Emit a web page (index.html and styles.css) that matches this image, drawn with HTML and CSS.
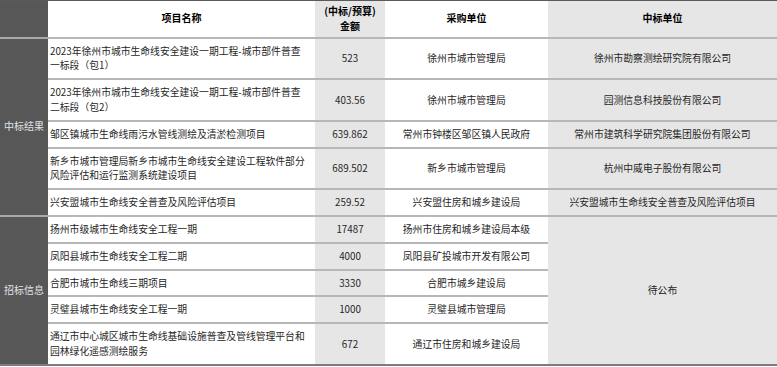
FILE: index.html
```html
<!DOCTYPE html>
<html lang="zh-CN">
<head>
<meta charset="utf-8">
<title>城市生命线项目</title>
<link rel="stylesheet" href="styles.css">
</head>
<body>
<div class="sheet">
  <div class="cell cat head-cat"></div>
  <div class="cell head">项目名称</div>
  <div class="cell head gray">(中标/预算)<br>金额</div>
  <div class="cell head">采购单位</div>
  <div class="cell head gray">中标单位</div>

  <div class="cell cat span5">中标结果</div>
  <div class="cell name">2023年徐州市城市生命线安全建设一期工程-城市部件普查<br>一标段（包1）</div>
  <div class="cell num gray">523</div>
  <div class="cell mid">徐州市城市管理局</div>
  <div class="cell mid gray">徐州市勘察测绘研究院有限公司</div>

  <div class="cell name">2023年徐州市城市生命线安全建设一期工程-城市部件普查<br>二标段（包2）</div>
  <div class="cell num gray">403.56</div>
  <div class="cell mid">徐州市城市管理局</div>
  <div class="cell mid gray">园测信息科技股份有限公司</div>

  <div class="cell name">邹区镇城市生命线雨污水管线测绘及清淤检测项目</div>
  <div class="cell num gray">639.862</div>
  <div class="cell mid">常州市钟楼区邹区镇人民政府</div>
  <div class="cell mid gray">常州市建筑科学研究院集团股份有限公司</div>

  <div class="cell name">新乡市城市管理局新乡市城市生命线安全建设工程软件部分<br>风险评估和运行监测系统建设项目</div>
  <div class="cell num gray">689.502</div>
  <div class="cell mid">新乡市城市管理局</div>
  <div class="cell mid gray">杭州中威电子股份有限公司</div>

  <div class="cell name">兴安盟城市生命线安全普查及风险评估项目</div>
  <div class="cell num gray">259.52</div>
  <div class="cell mid">兴安盟住房和城乡建设局</div>
  <div class="cell mid gray">兴安盟城市生命线安全普查及风险评估项目</div>

  <div class="cell cat span5 last">招标信息</div>
  <div class="cell name">扬州市级城市生命线安全工程一期</div>
  <div class="cell num gray">17487</div>
  <div class="cell mid">扬州市住房和城乡建设局本级</div>
  <div class="cell mid gray pending span5 last">待公布</div>

  <div class="cell name">凤阳县城市生命线安全工程二期</div>
  <div class="cell num gray">4000</div>
  <div class="cell mid">凤阳县矿投城市开发有限公司</div>

  <div class="cell name">合肥市城市生命线三期项目</div>
  <div class="cell num gray">3330</div>
  <div class="cell mid">合肥市城乡建设局</div>

  <div class="cell name">灵璧县城市生命线安全工程一期</div>
  <div class="cell num gray">1000</div>
  <div class="cell mid">灵璧县城市管理局</div>

  <div class="cell name last">通辽市中心城区城市生命线基础设施普查及管线管理平台和<br>园林绿化遥感测绘服务</div>
  <div class="cell num gray last">672</div>
  <div class="cell mid last">通辽市住房和城乡建设局</div>
</div>
</body>
</html>
```

FILE: styles.css
```css
html, body {
  margin: 0;
  padding: 0;
  background: #ffffff;
}

body {
  font-family: "Noto Sans CJK SC", "Noto Sans", sans-serif;
  font-size: 9.8px;
  color: #262626;
}

.sheet {
  display: grid;
  grid-template-columns: 48px 267px 70px 163px 1fr;
  border-top: 1px solid #5a5a5a;
  width: 777px;
}

.cell {
  display: flex;
  align-items: center;
  padding: 5px 2px;
  line-height: 14.8px;
  border-bottom: 2px solid #b7b7b7;
  background: #ffffff;
  white-space: nowrap;
}

.head {
  justify-content: center;
  text-align: center;
  font-weight: bold;
  color: #000000;
  padding: 3px 2px;
  font-size: 10px;
}

.gray {
  background: #e6e6e6;
}

.cat {
  grid-column: 1;
  background: #575757;
  color: #e2e2e2;
  justify-content: center;
  border-bottom-color: #a9a9a9;
  font-size: 10px;
}

.span5 {
  grid-row: span 5;
}

.pending {
  grid-column: 5;
}

.name {
  justify-content: flex-start;
}

.num,
.mid {
  justify-content: center;
  text-align: center;
}

.last {
  border-bottom-color: #7c7c7c;
}
```
